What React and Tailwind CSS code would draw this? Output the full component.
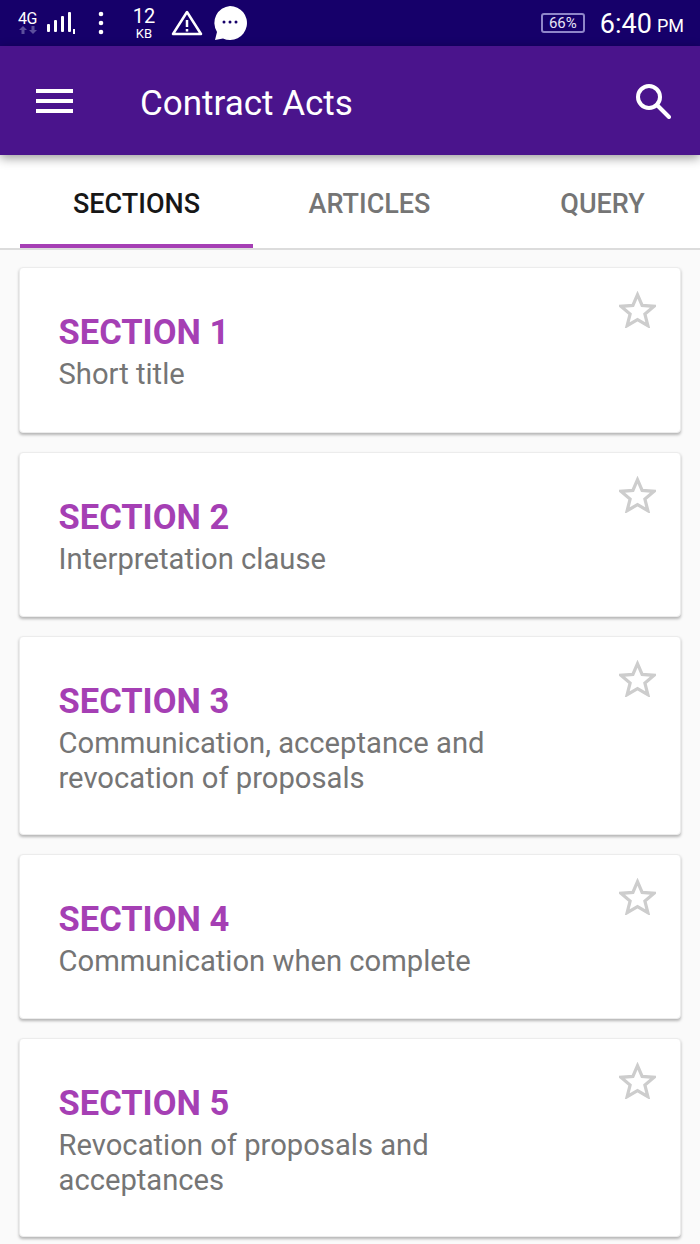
const sections = [
  { name: 'SECTION 1', text: ['Short title'], h: 'h-[166px]' },
  { name: 'SECTION 2', text: ['Interpretation clause'], h: 'h-[165px]' },
  { name: 'SECTION 3', text: ['Communication, acceptance and', 'revocation of proposals'], h: 'h-[199px]' },
  { name: 'SECTION 4', text: ['Communication when complete'], h: 'h-[165px]' },
  { name: 'SECTION 5', text: ['Revocation of proposals and', 'acceptances'], h: 'h-[199px]' },
];

function StatusBar() {
  return (
    <div className="h-[46px] bg-[#16006a] flex items-center text-white shrink-0 relative">
      <div className="flex items-center pl-[17px]">
        <div className="w-[21px] flex flex-col items-center">
          <span className="text-[16px] leading-[14px] tracking-[-0.5px]">4G</span>
          <svg width="20" height="9" viewBox="0 0 20 9" fill="#5c4f9c">
            <path d="M5 0l4 4H6.500v4h-3V4H1zM15 8l-4-4h2.500V0h3v4H19z" />
          </svg>
        </div>
        <svg className="ml-[8px]" width="30" height="24" viewBox="0 0 30 24" fill="white">
          <rect x="1" y="13" width="3" height="8" rx="1" />
          <rect x="8" y="9" width="3" height="12" rx="1" />
          <rect x="15" y="5" width="3" height="16" rx="1" />
          <rect x="22" y="1" width="3" height="20" rx="1" />
          <rect x="27" y="18" width="2" height="5" />
        </svg>
        <svg className="ml-[22px]" width="6" height="26" viewBox="0 0 6 26" fill="white">
          <circle cx="3" cy="4" r="2.300" />
          <circle cx="3" cy="13" r="2.300" />
          <circle cx="3" cy="22" r="2.300" />
        </svg>
        <div className="ml-[28px] w-[24px] flex flex-col items-center">
          <span className="text-[20px] leading-[20px]">12</span>
          <span className="mt-[1px] text-[13px] leading-[14px]">KB</span>
        </div>
        <svg className="ml-[15px]" width="32" height="28" viewBox="0 0 32 28" fill="none" stroke="white" strokeWidth="2.500" strokeLinejoin="round">
          <path d="M16 3L2 25h28z" />
          <path d="M16 11v7M16 20v2.500" />
        </svg>
        <svg className="ml-[9px]" width="36" height="36" viewBox="0 0 36 36">
          <path d="M18 1a17 17 0 1 1-7 32.500L3 35l2-8A17 17 0 0 1 18 1z" fill="white" />
          <circle cx="12" cy="17" r="1.500" fill="#16006a" />
          <circle cx="18" cy="17" r="1.500" fill="#16006a" />
          <circle cx="24" cy="17" r="1.500" fill="#16006a" />
        </svg>
      </div>
      <div className="ml-auto flex items-center pr-[16px]">
        <div className="w-[44px] h-[20px] border-2 border-[#8f86c9] rounded-[3px] flex items-center justify-center text-[15px] leading-none text-[#e6e3f5]">66%</div>
        <span className="ml-[15px] mt-[2px] text-[27px] leading-none">6:40</span>
        <span className="ml-[5px] mt-[6px] text-[18px] leading-none">PM</span>
      </div>
    </div>
  );
}

function AppBar() {
  return (
    <div className="h-[109px] bg-[#4a148c] flex items-center text-white shrink-0 relative z-10 shadow-[0_3px_10px_rgba(0,0,0,0.4)]">
      <div className="ml-[36px] w-[37px] flex flex-col gap-[6px]">
        <div className="h-[4px] bg-white" />
        <div className="h-[4px] bg-white" />
        <div className="h-[4px] bg-white" />
      </div>
      <div className="ml-[67px] mt-[5px] text-[35px] leading-none">Contract Acts</div>
      <svg className="ml-auto mr-[29px]" width="36" height="36" viewBox="0 0 36 36" fill="none" stroke="white" strokeWidth="4">
        <circle cx="14" cy="14" r="11" />
        <path d="M22 22l12 12" strokeLinecap="round" />
      </svg>
    </div>
  );
}

function Tabs() {
  return (
    <div className="h-[95px] bg-white border-b-2 border-[#dcdcdc] flex pl-[20px] shrink-0 text-[27px] font-medium overflow-hidden">
      <div className="w-[233px] h-[93px] shrink-0 flex items-center justify-center pt-[10px] text-[#171717] border-b-[4px] border-[#a53fb4]">SECTIONS</div>
      <div className="w-[233px] h-[93px] shrink-0 flex items-center justify-center pt-[6px] text-[#757575]">ARTICLES</div>
      <div className="w-[233px] h-[93px] shrink-0 flex items-center justify-center pt-[6px] text-[#757575]">QUERY</div>
    </div>
  );
}

function Star() {
  return (
    <svg className="absolute top-[23px] right-[24px]" width="37" height="37" viewBox="0 0 40 38" fill="none" stroke="#cdcdcd" strokeWidth="3.500" strokeLinejoin="miter">
      <path d="M20 3l5 11.500 13 1-10 8.500 3.200 12.500L20 30l-11.200 6.500L12 24 2 15.500l13-1z" />
    </svg>
  );
}

function Card({ name, text, h }) {
  return (
    <div className={`relative ${h} bg-white rounded-[4px] border border-[#ececec] shadow-[0_2px_3px_rgba(0,0,0,0.28)] pl-[38.500px] pt-[45px]`}>
      <div className="text-[34.500px] leading-[38px] font-bold text-[#a53fb4]">{name}</div>
      <div className="mt-[6px] text-[29.200px] leading-[35px] text-[#757575]">
        {text.map((line) => (
          <div key={line}>{line}</div>
        ))}
      </div>
      <Star />
    </div>
  );
}

export default function App() {
  return (
    <div className="w-[700px] h-[1244px] overflow-hidden flex flex-col bg-[#fafafa] font-['Roboto',sans-serif]">
      <StatusBar />
      <AppBar />
      <Tabs />
      <div className="flex flex-col gap-[19px] px-[19px] pt-[17px]">
        {sections.map((s) => (
          <Card key={s.name} {...s} />
        ))}
      </div>
    </div>
  );
}
